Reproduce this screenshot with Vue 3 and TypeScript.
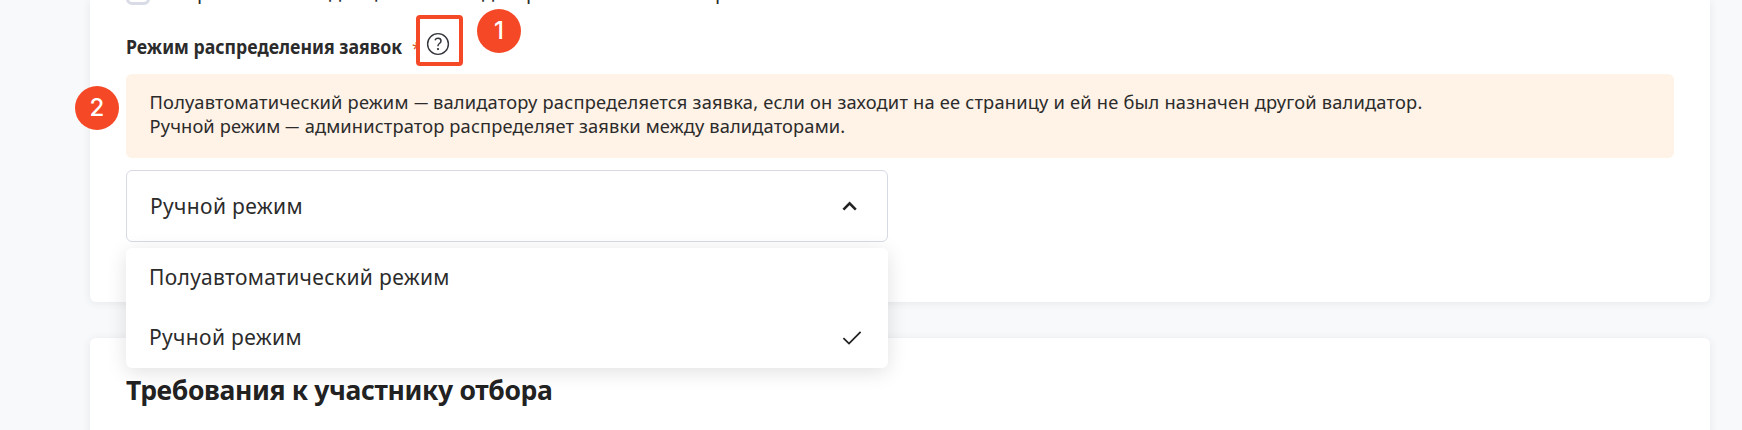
<script setup lang="ts">
import { ref } from 'vue'

interface Mode {
  id: string
  title: string
}

const modes: Mode[] = [
  { id: 'semi', title: 'Полуавтоматический режим' },
  { id: 'manual', title: 'Ручной режим' },
]
const selected = ref('manual')
const open = ref(true)

function choose(id: string) {
  selected.value = id
  open.value = false
}
</script>

<template>
  <main class="page">
    <section class="card settings">
      <div class="option">
        <span class="checkbox"></span>
        <span class="option-text">
          <span class="w1">р</span><span class="w2">д</span><span class="w3">ц</span><span class="w4">д</span><span class="w5">р</span><span class="w6">р</span>
        </span>
      </div>

      <div class="label-row">
        <span class="label"><b class="label-text">Режим распределения заявок</b></span>
        <span class="required">*</span>
        <span class="help">
          <svg width="24" height="24" viewBox="0 0 24 24" fill="none">
            <circle cx="12" cy="12" r="10.4" stroke="#33363b" stroke-width="1.4" />
            <path d="M9 8.2c.5-1.2 1.6-1.9 3-1.9 1.8 0 3 1 3 2.6 0 1.3-.7 1.9-1.6 2.6-.9.7-1.4 1.1-1.4 2.3v.5" stroke="#33363b" stroke-width="1.5" />
            <circle cx="12" cy="17.1" r="1.15" fill="#33363b" />
          </svg>
          <span class="marker marker-one">1</span>
        </span>
      </div>

      <div class="notice">
        <p>Полуавтоматический режим <span class="dash">—</span> валидатору распределяется заявка, если он заходит на ее страницу и ей не был назначен другой валидатор.</p>
        <p class="second">Ручной режим <span class="dash">—</span> администратор распределяет заявки между валидаторами.</p>
        <span class="marker marker-two">2</span>
      </div>

      <div class="select">
        <div class="control" @click="open = !open">
          <span>{{ modes.find((m) => m.id === selected)?.title }}</span>
          <svg width="16" height="12" viewBox="0 0 16 12" fill="none">
            <path d="M1.4 9.6 7.6 3.4l6.2 6.2" stroke="#222" stroke-width="2.6" />
          </svg>
        </div>
        <ul v-if="open" class="menu">
          <li v-for="mode in modes" :key="mode.id" @click="choose(mode.id)">
            <span>{{ mode.title }}</span>
            <svg v-if="mode.id === selected" width="20" height="16" viewBox="0 0 20 16" fill="none">
              <path d="M1.4 9.2 7 14.6 18.6 2.8" stroke="#222" stroke-width="1.8" />
            </svg>
          </li>
        </ul>
      </div>
    </section>

    <section class="card requirements">
      <h2>Требования к участнику отбора</h2>
    </section>
  </main>
</template>

<style>
body {
  margin: 0;
  overflow: hidden;
}
</style>

<style scoped>
.page {
  box-sizing: border-box;
  height: 430px;
  padding: 0 32px 0 90px;
  overflow: hidden;
  background: #f8f9fb;
  color: #2b2b2b;
  font-family: "Noto Sans", sans-serif;
}
.card {
  box-sizing: border-box;
  padding: 0 36px;
  background: #fff;
  box-shadow: 0 1px 8px rgba(40, 50, 70, 0.09);
}
.settings {
  height: 302px;
  border-radius: 0 0 6px 6px;
}
.requirements {
  height: 120px;
  margin-top: 36px;
  padding-top: 32px;
  border-radius: 6px;
}
.option {
  display: flex;
  align-items: flex-end;
  height: 5px;
}
.checkbox {
  box-sizing: border-box;
  flex: none;
  width: 24px;
  height: 24px;
  border: 3px solid #d9dce6;
  border-radius: 6px;
}
.option-text {
  display: flex;
  flex: none;
  margin-bottom: -1px;
  padding-left: 47px;
  font-size: 20px;
  line-height: 28px;
}
.option-text span {
  flex: none;
  white-space: nowrap;
}
.option-text .w1 { width: 132px; }
.option-text .w2 { width: 36px; }
.option-text .w3 { width: 117px; }
.option-text .w4 { width: 44px; }
.option-text .w5 { width: 189px; }
.option-text .w6 { width: 13px; }
.label-row {
  display: flex;
  height: 69px;
}
.label {
  width: 276px;
  padding-top: 28px;
  font-size: 20px;
  line-height: 28px;
  white-space: nowrap;
}
.label-text {
  display: inline-block;
  margin-left: -0.5px;
  transform: scaleX(0.885);
  transform-origin: left center;
}
.required {
  box-sizing: border-box;
  width: 14px;
  padding: 32px 0 0 10px;
  color: #d8552f;
  font-size: 16px;
  line-height: 22px;
}
.help {
  position: relative;
  z-index: 1;
  box-sizing: border-box;
  width: 47px;
  height: 51px;
  margin-top: 10px;
  padding: 12px 0 0 6px;
  border: 4px solid #f54826;
  border-radius: 4px;
  background: #fff;
}
.help svg {
  display: block;
  margin: 0.5px 0 0 0.4px;
}
.marker {
  position: absolute;
  width: 44px;
  height: 44px;
  border-radius: 50%;
  background: #f54826;
  color: #fff;
  font: 500 24px/43px Inter, sans-serif;
  text-align: center;
}
.marker-one {
  top: -10px;
  left: 57px;
}
.marker-two {
  top: 12px;
  left: -51px;
}
.notice {
  position: relative;
  box-sizing: border-box;
  height: 84px;
  padding: 16px 24px 16px 23.5px;
  border-radius: 6px;
  background: #fff2e6;
  font-size: 18.3px;
  line-height: 24px;
  letter-spacing: 0.19px;
  white-space: nowrap;
}
.notice p {
  margin: 0;
}
.notice .second {
  letter-spacing: 0.13px;
}
.dash {
  display: inline-block;
  margin: 0 -2px;
  transform: scaleX(0.78);
}
.select {
  position: relative;
  width: 762px;
  margin-top: 12px;
  font-size: 21px;
  letter-spacing: 0.35px;
}
.control {
  display: flex;
  box-sizing: border-box;
  align-items: center;
  justify-content: space-between;
  height: 72px;
  padding: 0 29px 1px 23px;
  border: 1px solid #d7dae5;
  border-radius: 6px;
  background: #fff;
}
.menu {
  position: absolute;
  z-index: 2;
  top: 78px;
  left: 0;
  width: 100%;
  margin: 0;
  padding: 0;
  border-radius: 6px;
  background: #fff;
  box-shadow: 0 4px 20px rgba(0, 0, 0, 0.12);
  list-style: none;
}
.menu li {
  display: flex;
  box-sizing: border-box;
  align-items: center;
  justify-content: space-between;
  height: 60px;
  padding: 0 26px 3px 23px;
}
h2 {
  margin: 0;
  color: #222;
  font-size: 26.5px;
  line-height: 40px;
  letter-spacing: -0.35px;
}
</style>
